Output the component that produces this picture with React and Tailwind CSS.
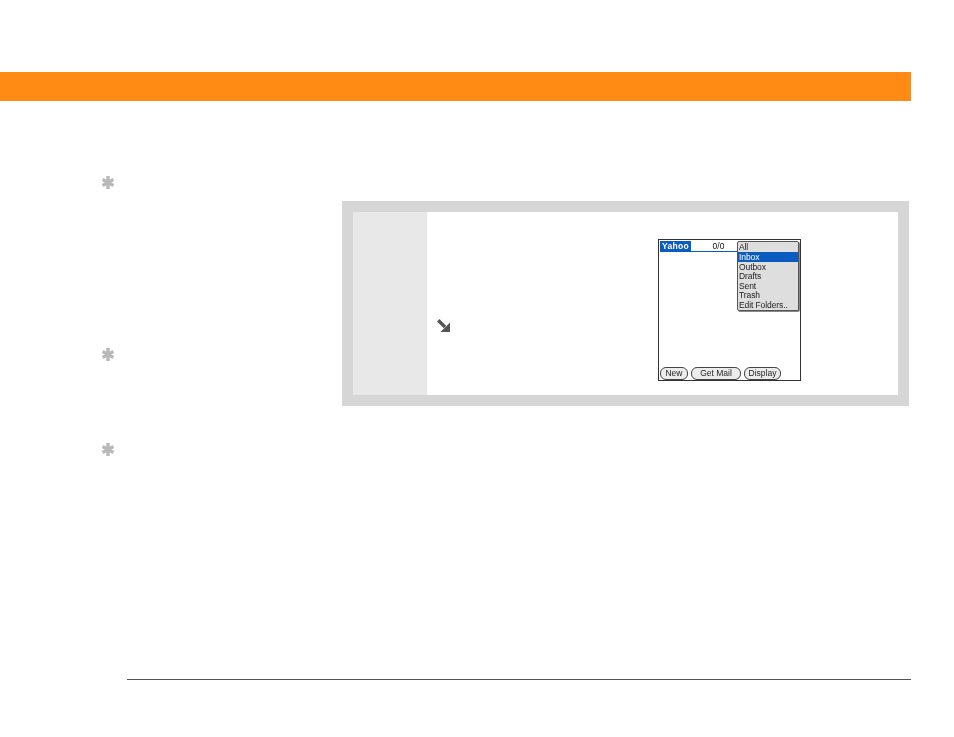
import React from "react";

const Tip = ({ className }) => (
  <svg viewBox="0 0 12 13" className={`w-3 h-[13px] ${className}`}>
    <g stroke="#b8b8b8" strokeWidth="3.4">
      <line x1="6" y1="0" x2="6" y2="13" />
      <line x1="0.6" y1="3.4" x2="11.4" y2="9.6" />
      <line x1="0.6" y1="9.6" x2="11.4" y2="3.4" />
    </g>
  </svg>
);

const folders = ["Inbox", "Outbox", "Drafts", "Sent", "Trash", "Edit Folders.."];

const PalmButton = ({ width, children }) => (
  <div className={`${width} h-[13px] rounded-[6px] border border-[#444] bg-[#ececec] flex items-center justify-center text-[8.5px] leading-none text-[#222]`}>
    {children}
  </div>
);

const PalmScreen = () => (
  <div className="relative w-[143px] h-[142px] border border-[#333] bg-white flex flex-col justify-between font-['Liberation_Sans',sans-serif] blur-[0.3px]">
    <div className="mt-px ml-px flex h-[11px] border-b border-[#0a5cc0] w-[78px]">
      <div className="w-[31px] bg-[#0a5cc0] text-white text-[8.5px] font-bold leading-[10px] text-center tracking-[0.3px]">Yahoo</div>
      <div className="flex-1 text-[8.5px] leading-[10px] text-center pl-[8px] text-[#111]">0/0</div>
    </div>
    <div className="ml-px flex gap-[3px]">
      <PalmButton width="w-[28px]">New</PalmButton>
      <PalmButton width="w-[50px]">Get Mail</PalmButton>
      <PalmButton width="w-[37px]">Display</PalmButton>
    </div>
    {/* folder menu sits over the screen */}
    <div className="absolute left-[78px] top-[1px] w-[62px] h-[70px] border border-[#555] rounded-[2px] bg-[#dedede] shadow-[1px_1px_0_#888] text-[8.5px] leading-[10.5px] text-[#222] tracking-[-0.1px]">
      <div className="pl-[1px] h-[10px]">All</div>
      {folders.map((f, i) => (
        <div key={f} className={i === 0 ? "pl-[1px] h-[9.6px] bg-[#0a5cc0] text-white" : "pl-[1px] h-[9.6px]"}>
          {f}
        </div>
      ))}
    </div>
  </div>
);

const App = () => {
  return (
    <div className="w-[954px] h-[737px] bg-white pt-[72px] overflow-hidden">
      <div className="w-[911px] h-[29px] bg-[#ff8a14]" />

      <div className="flex h-[578px]">
        <div className="ml-[102px] w-[240px] pt-[75px]">
          <Tip />
          <Tip className="mt-[159px]" />
          <Tip className="mt-[82px]" />
        </div>

        <div className="mt-[100px] w-[567px] h-[205px] border-[11px] border-[#d6d6d6] flex">
          <div className="w-[74px] bg-[#e8e8e8]" />
          <div className="flex-1 bg-white flex">
            <div className="w-[231px] pl-[10px] pt-[107px]">
              <svg viewBox="0 0 13 13" className="w-[13px] h-[13px]">
                <path d="M1.2 1.2 L8 8" stroke="#555" strokeWidth="3.4" fill="none" />
                <path d="M13 3.5 V13 H3.5 Z" fill="#555" />
              </svg>
            </div>
            <div className="pt-[27px]">
              <PalmScreen />
            </div>
          </div>
        </div>
      </div>

      <div className="ml-[127px] w-[784px] h-px bg-[#555]" />
    </div>
  );
};

export default App;
